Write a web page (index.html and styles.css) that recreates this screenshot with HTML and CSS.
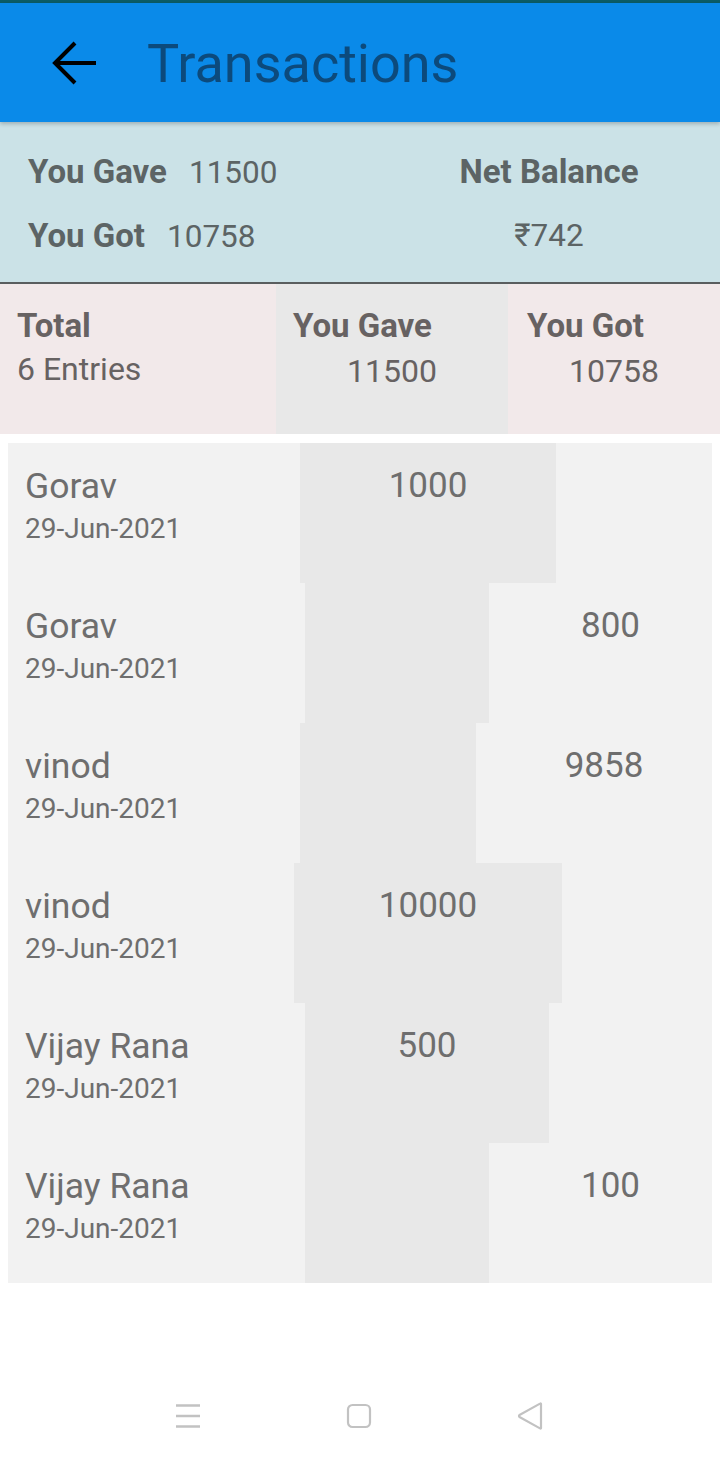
FILE: index.html
```html
<!DOCTYPE html>
<html lang="en">
<head>
<meta charset="utf-8">
<title>Transactions</title>
<link rel="stylesheet" href="styles.css">
</head>
<body>
<div class="status"></div>
<header class="appbar">
  <svg class="back" width="46" height="44" viewBox="0 0 46 44" aria-hidden="true">
    <path d="M4 22 H45 M24 2 L4 22 L24 42" fill="none" stroke="#000" stroke-width="4"/>
  </svg>
  <h1 class="title">Transactions</h1>
</header>

<section class="summary">
  <div class="sum-left">
    <div class="sum-line"><span class="sum-label">You Gave</span><span class="sum-val">11500</span></div>
    <div class="sum-line"><span class="sum-label">You Got</span><span class="sum-val">10758</span></div>
  </div>
  <div class="sum-right">
    <div class="sum-line center"><span class="sum-label">Net Balance</span></div>
    <div class="sum-line center"><span class="sum-val">₹742</span></div>
  </div>
</section>

<section class="thead">
  <div class="hcell pink c-total">
    <div class="hlabel">Total</div>
    <div class="hval left">6 Entries</div>
  </div>
  <div class="hcell grey c-gave">
    <div class="hlabel">You Gave</div>
    <div class="hval">11500</div>
  </div>
  <div class="hcell pink c-got">
    <div class="hlabel">You Got</div>
    <div class="hval">10758</div>
  </div>
</section>

<section class="list">
  <div class="row r1">
    <div class="who"><div class="name">Gorav</div><div class="date">29-Jun-2021</div></div>
    <div class="gave">1000</div>
    <div class="got"></div>
  </div>
  <div class="row r2">
    <div class="who"><div class="name">Gorav</div><div class="date">29-Jun-2021</div></div>
    <div class="gave"></div>
    <div class="got">800</div>
  </div>
  <div class="row r3">
    <div class="who"><div class="name">vinod</div><div class="date">29-Jun-2021</div></div>
    <div class="gave"></div>
    <div class="got">9858</div>
  </div>
  <div class="row r4">
    <div class="who"><div class="name">vinod</div><div class="date">29-Jun-2021</div></div>
    <div class="gave">10000</div>
    <div class="got"></div>
  </div>
  <div class="row r5">
    <div class="who"><div class="name">Vijay Rana</div><div class="date">29-Jun-2021</div></div>
    <div class="gave">500</div>
    <div class="got"></div>
  </div>
  <div class="row r6">
    <div class="who"><div class="name">Vijay Rana</div><div class="date">29-Jun-2021</div></div>
    <div class="gave"></div>
    <div class="got">100</div>
  </div>
</section>

<nav class="navbar">
  <svg width="26" height="26" viewBox="0 0 26 26" aria-hidden="true">
    <path d="M1 2.5 H25 M1 13 H25 M1 23.5 H25" stroke="#c2c2c2" stroke-width="2.4" fill="none"/>
  </svg>
  <svg width="26" height="26" viewBox="0 0 26 26" aria-hidden="true">
    <rect x="2" y="2" width="22" height="22" rx="4.5" fill="none" stroke="#c2c2c2" stroke-width="2.2"/>
  </svg>
  <svg width="26" height="28" viewBox="0 0 26 28" aria-hidden="true">
    <path d="M24 2 L24 26 Q24 27 23 26.4 L2.5 15 Q1.5 14 2.5 13 L23 1.6 Q24 1 24 2 Z" fill="none" stroke="#c2c2c2" stroke-width="2.2" stroke-linejoin="round"/>
  </svg>
</nav>
</body>
</html>
```

FILE: styles.css
```css
* { box-sizing: border-box; }
html, body { margin: 0; padding: 0; }
body {
  width: 720px;
  height: 1458px;
  background: #ffffff;
  font-family: Roboto, "Noto Sans", "DejaVu Sans", sans-serif;
  overflow: hidden;
}

.status { height: 3px; background: #0b5c66; }

.appbar {
  position: relative;
  z-index: 2;
  height: 119px;
  background: #0a8ae9;
  display: flex;
  align-items: center;
  padding-left: 51px;
  box-shadow: 0 2px 4px rgba(0, 0, 0, 0.22);
}
.back { display: block; flex: none; }
.title {
  margin: 2px 0 0 50px;
  font-size: 54px;
  font-weight: 400;
  color: #0c4a7c;
  line-height: 1;
}

.summary {
  height: 162px;
  background: #cbe2e7;
  border-bottom: 2px solid #5a5e5f;
  display: grid;
  grid-template-columns: 380px 1fr;
  padding-top: 18px;
  color: #5c6465;
}
.sum-left { padding-left: 28px; }
.sum-line {
  display: flex;
  align-items: baseline;
  gap: 22px;
  height: 64px;
  line-height: 64px;
}
.sum-line.center { justify-content: center; padding-right: 2px; }
.sum-label { font-size: 33px; font-weight: 700; }
.sum-val { font-size: 31.5px; font-weight: 400; }

.thead {
  height: 150px;
  display: grid;
  grid-template-columns: 276px 232px 1fr;
  color: #676262;
}
.hcell { padding-top: 22px; }
.pink { background: #f2e9ea; }
.grey { background: #e8e8e8; }
.hlabel {
  font-size: 33px;
  font-weight: 700;
  line-height: 40px;
  padding-left: 17px;
}
.c-got .hlabel { padding-left: 19px; }
.hval {
  font-size: 32px;
  line-height: 46px;
  text-align: center;
}
.hval.left { text-align: left; padding-left: 17px; }
.c-gave .hval, .c-got .hval { padding-top: 2px; }

.list {
  margin: 9px 8px 0;
  background: #f2f2f2;
  color: #6e6e6e;
}
.row {
  height: 140px;
  display: grid;
}
.r1 { grid-template-columns: 292px 256px 1fr; }
.r2 { grid-template-columns: 297px 184px 1fr; }
.r3 { grid-template-columns: 292px 176px 1fr; }
.r4 { grid-template-columns: 286px 268px 1fr; }
.r5 { grid-template-columns: 297px 244px 1fr; }
.r6 { grid-template-columns: 297px 184px 1fr; }

.who { padding: 21px 0 0 17px; }
.name { font-size: 35.5px; line-height: 44px; }
.date { font-size: 28px; line-height: 41px; }
.gave {
  background: #e8e8e8;
  font-size: 35px;
  line-height: 44px;
  padding-top: 21px;
  text-align: center;
}
.got {
  font-size: 35px;
  line-height: 44px;
  padding: 21px 0 0 20px;
  text-align: center;
}

.navbar {
  margin-top: 119px;
  display: flex;
  align-items: center;
  gap: 145px;
  padding-left: 175px;
  height: 28px;
}
.navbar svg { display: block; flex: none; }
```
